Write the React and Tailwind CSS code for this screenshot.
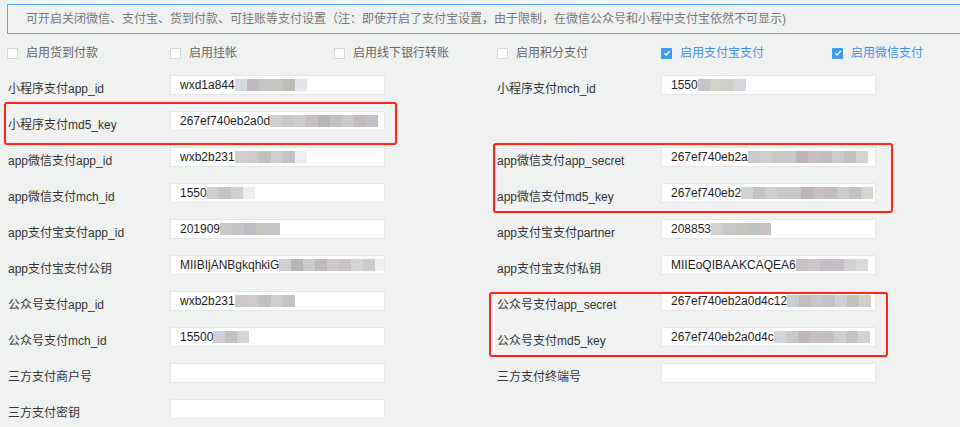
import React from "react";

const font = { fontFamily: '"Liberation Sans", "Noto Sans CJK SC", sans-serif' };

const rows = [
  {
    l: ["小程序支付app_id", "wxd1a844", ["#d9dadf", "#c2b9bc", "#c7c7c4", "#c9c7c4", "#bfbbb6", "#e2e4e8"]],
    r: ["小程序支付mch_id", "1550", ["#c5c4c8", "#d3d0c9", "#cfd0c9", "#d8d5dd"]],
  },
  {
    l: ["小程序支付md5_key", "267ef740eb2a0d", ["#cfcfd0", "#c8c8c8", "#cdcccb", "#c4bfc2", "#b9b4b9", "#c2c2c2", "#cbcbc8", "#c0bcbd", "#c2bfc9"]],
    r: null,
  },
  {
    l: ["app微信支付app_id", "wxb2b231", ["#cfcfcf", "#d2c8cf", "#c0c0bc", "#cfcfcf", "#c0c4c4", "#eceef2"]],
    r: ["app微信支付app_secret", "267ef740eb2a", ["#cbcbcb", "#cfcfd2", "#cacac4", "#c5c9c9", "#bdb6b6", "#c6bfc6", "#c0bcc0", "#cccccc", "#bfc2c0", "#d6d3cc"]],
  },
  {
    l: ["app微信支付mch_id", "1550", ["#cfcfd3", "#c7c3c4", "#d0d0d4", "#eeeef0"]],
    r: ["app微信支付md5_key", "267ef740eb2", ["#d2d2d2", "#c3c3c7", "#cfcfd0", "#cacac4", "#c5c9c9", "#bdb6b6", "#c6bfc6", "#c0bcc0", "#cccccc", "#bfc2c0", "#d6d3cc"]],
  },
  {
    l: ["app支付宝支付app_id", "201909", ["#c9c9c9", "#c5c5c7", "#bdbcc0", "#c7c7c0", "#c7c5c8"]],
    r: ["app支付宝支付partner", "208853", ["#d0d0d0", "#c9c8c5", "#c6c6c0", "#bfc3c4", "#c8c1c1"]],
  },
  {
    l: ["app支付宝支付公钥", "MIIBIjANBgkqhkiG", ["#cfcfcf", "#b7b4b4", "#cbcbcb", "#c0b9ba", "#cfc9c9", "#c8c5c5", "#d5d5d5", "#cbcbd0", "#f0f0f0"]],
    r: ["app支付宝支付私钥", "MIIEoQIBAAKCAQEA6", ["#c7c2c2", "#cdc8cb", "#c3bec3", "#c4bec7", "#d2d2d2", "#d8d8d8"]],
  },
  {
    l: ["公众号支付app_id", "wxb2b231", ["#c9c9c9", "#d2c8cf", "#c0c0bc", "#cfcfcf", "#c0c4c4"]],
    r: ["公众号支付app_secret", "267ef740eb2a0d4c12", ["#c8cdce", "#c1bebe", "#c8c8cb", "#c0c4c4", "#cfd0cf", "#c1c3c0", "#d3d0c9"]],
  },
  {
    l: ["公众号支付mch_id", "15500", ["#cfcfd3", "#c4bfc0", "#d3d3d7"]],
    r: ["公众号支付md5_key", "267ef740eb2a0d4c", ["#d2d3d4", "#c9c9cb", "#beb9b9", "#c6bfc6", "#c2bfc2", "#cfcfcf", "#c1c4c2", "#d6d3cc"]],
  },
  {
    l: ["三方支付商户号", "", []],
    r: ["三方支付终端号", "", []],
  },
  {
    l: ["三方支付密钥", "", []],
    r: null,
  },
];

const checks = [
  ["启用货到付款", false, "w-[163px]"],
  ["启用挂帐", false, "w-[164px]"],
  ["启用线下银行转账", false, "w-[163px]"],
  ["启用积分支付", false, "w-[164px]"],
  ["启用支付宝支付", true, "w-[171px]"],
  ["启用微信支付", true, "w-[120px]"],
];

const Field = ({ data, labelW }) => {
  if (!data) return <div className={`${labelW} shrink-0`}></div>;
  const [label, value, mosaic] = data;
  return (
    <div className="flex items-start">
      <div className={`${labelW} shrink-0 mt-[4px] leading-[20px] text-[12px] text-[#333]`}>{label}</div>
      <div className="flex items-center h-[20px] w-[215px] shrink-0 border border-[#e4e6e8] bg-white pl-[9px] overflow-hidden text-[12px] text-[#1e1e1e]">
        <span className="whitespace-nowrap">{value}</span>
        <div className="flex shrink-0">
          {mosaic.map((c, i) => (
            <div key={i} className="w-[12px] h-[12px]" style={{ background: c }}></div>
          ))}
        </div>
      </div>
    </div>
  );
};

export default function App() {
  return (
    <div className="relative w-[960px] h-[427px] overflow-hidden bg-[#f0f2f2]" style={font}>
      {/* notice */}
      <div className="mt-[4px] ml-[7px] w-[960px] h-[30px] border border-[#55a3f2] flex items-center pl-[18px] text-[12px] text-[#777] whitespace-nowrap">
        可开启关闭微信、支付宝、货到付款、可挂账等支付设置（注：即使开启了支付宝设置，由于限制，在微信公众号和小程中支付宝依然不可显示)
      </div>

      {/* checkboxes */}
      <div className="mt-[1px] h-[36px] flex items-center pl-[7px]">
        {checks.map(([label, on, w]) => (
          <div key={label} className={`${w} flex items-center gap-[8px] shrink-0`}>
            {on ? (
              <div className="w-[11px] h-[11px] bg-[#3d9bf0] rounded-[1px] flex items-center justify-center">
                <svg width="8" height="8" viewBox="0 0 8 8">
                  <path d="M1.2 4.2 L3.2 6 L6.8 2" stroke="white" strokeWidth="1.3" fill="none" />
                </svg>
              </div>
            ) : (
              <div className="w-[11px] h-[11px] bg-white border border-[#d6d6d6]"></div>
            )}
            <span className={`text-[12px] ${on ? "text-[#3d8ff0]" : "text-[#666]"}`}>{label}</span>
          </div>
        ))}
      </div>

      {/* form rows */}
      <div className="mt-[4px] pl-[8px]">
        {rows.map((row, i) => (
          <div key={i} className="h-[36px] flex items-start">
            <Field data={row.l} labelW="w-[162px]" />
            <div className="w-[112px] shrink-0"></div>
            <Field data={row.r} labelW="w-[164px]" />
          </div>
        ))}
      </div>

      {/* red annotation boxes */}
      <div className="absolute left-[4px] top-[102px] w-[393px] h-[43px] border-2 border-[#ff2416] rounded-[3px]"></div>
      <div className="absolute left-[493px] top-[143px] w-[400px] h-[70px] border-2 border-[#ff2416] rounded-[3px]"></div>
      <div className="absolute left-[489px] top-[292px] w-[399px] h-[65px] border-2 border-[#ff2416] rounded-[3px]"></div>
    </div>
  );
}
